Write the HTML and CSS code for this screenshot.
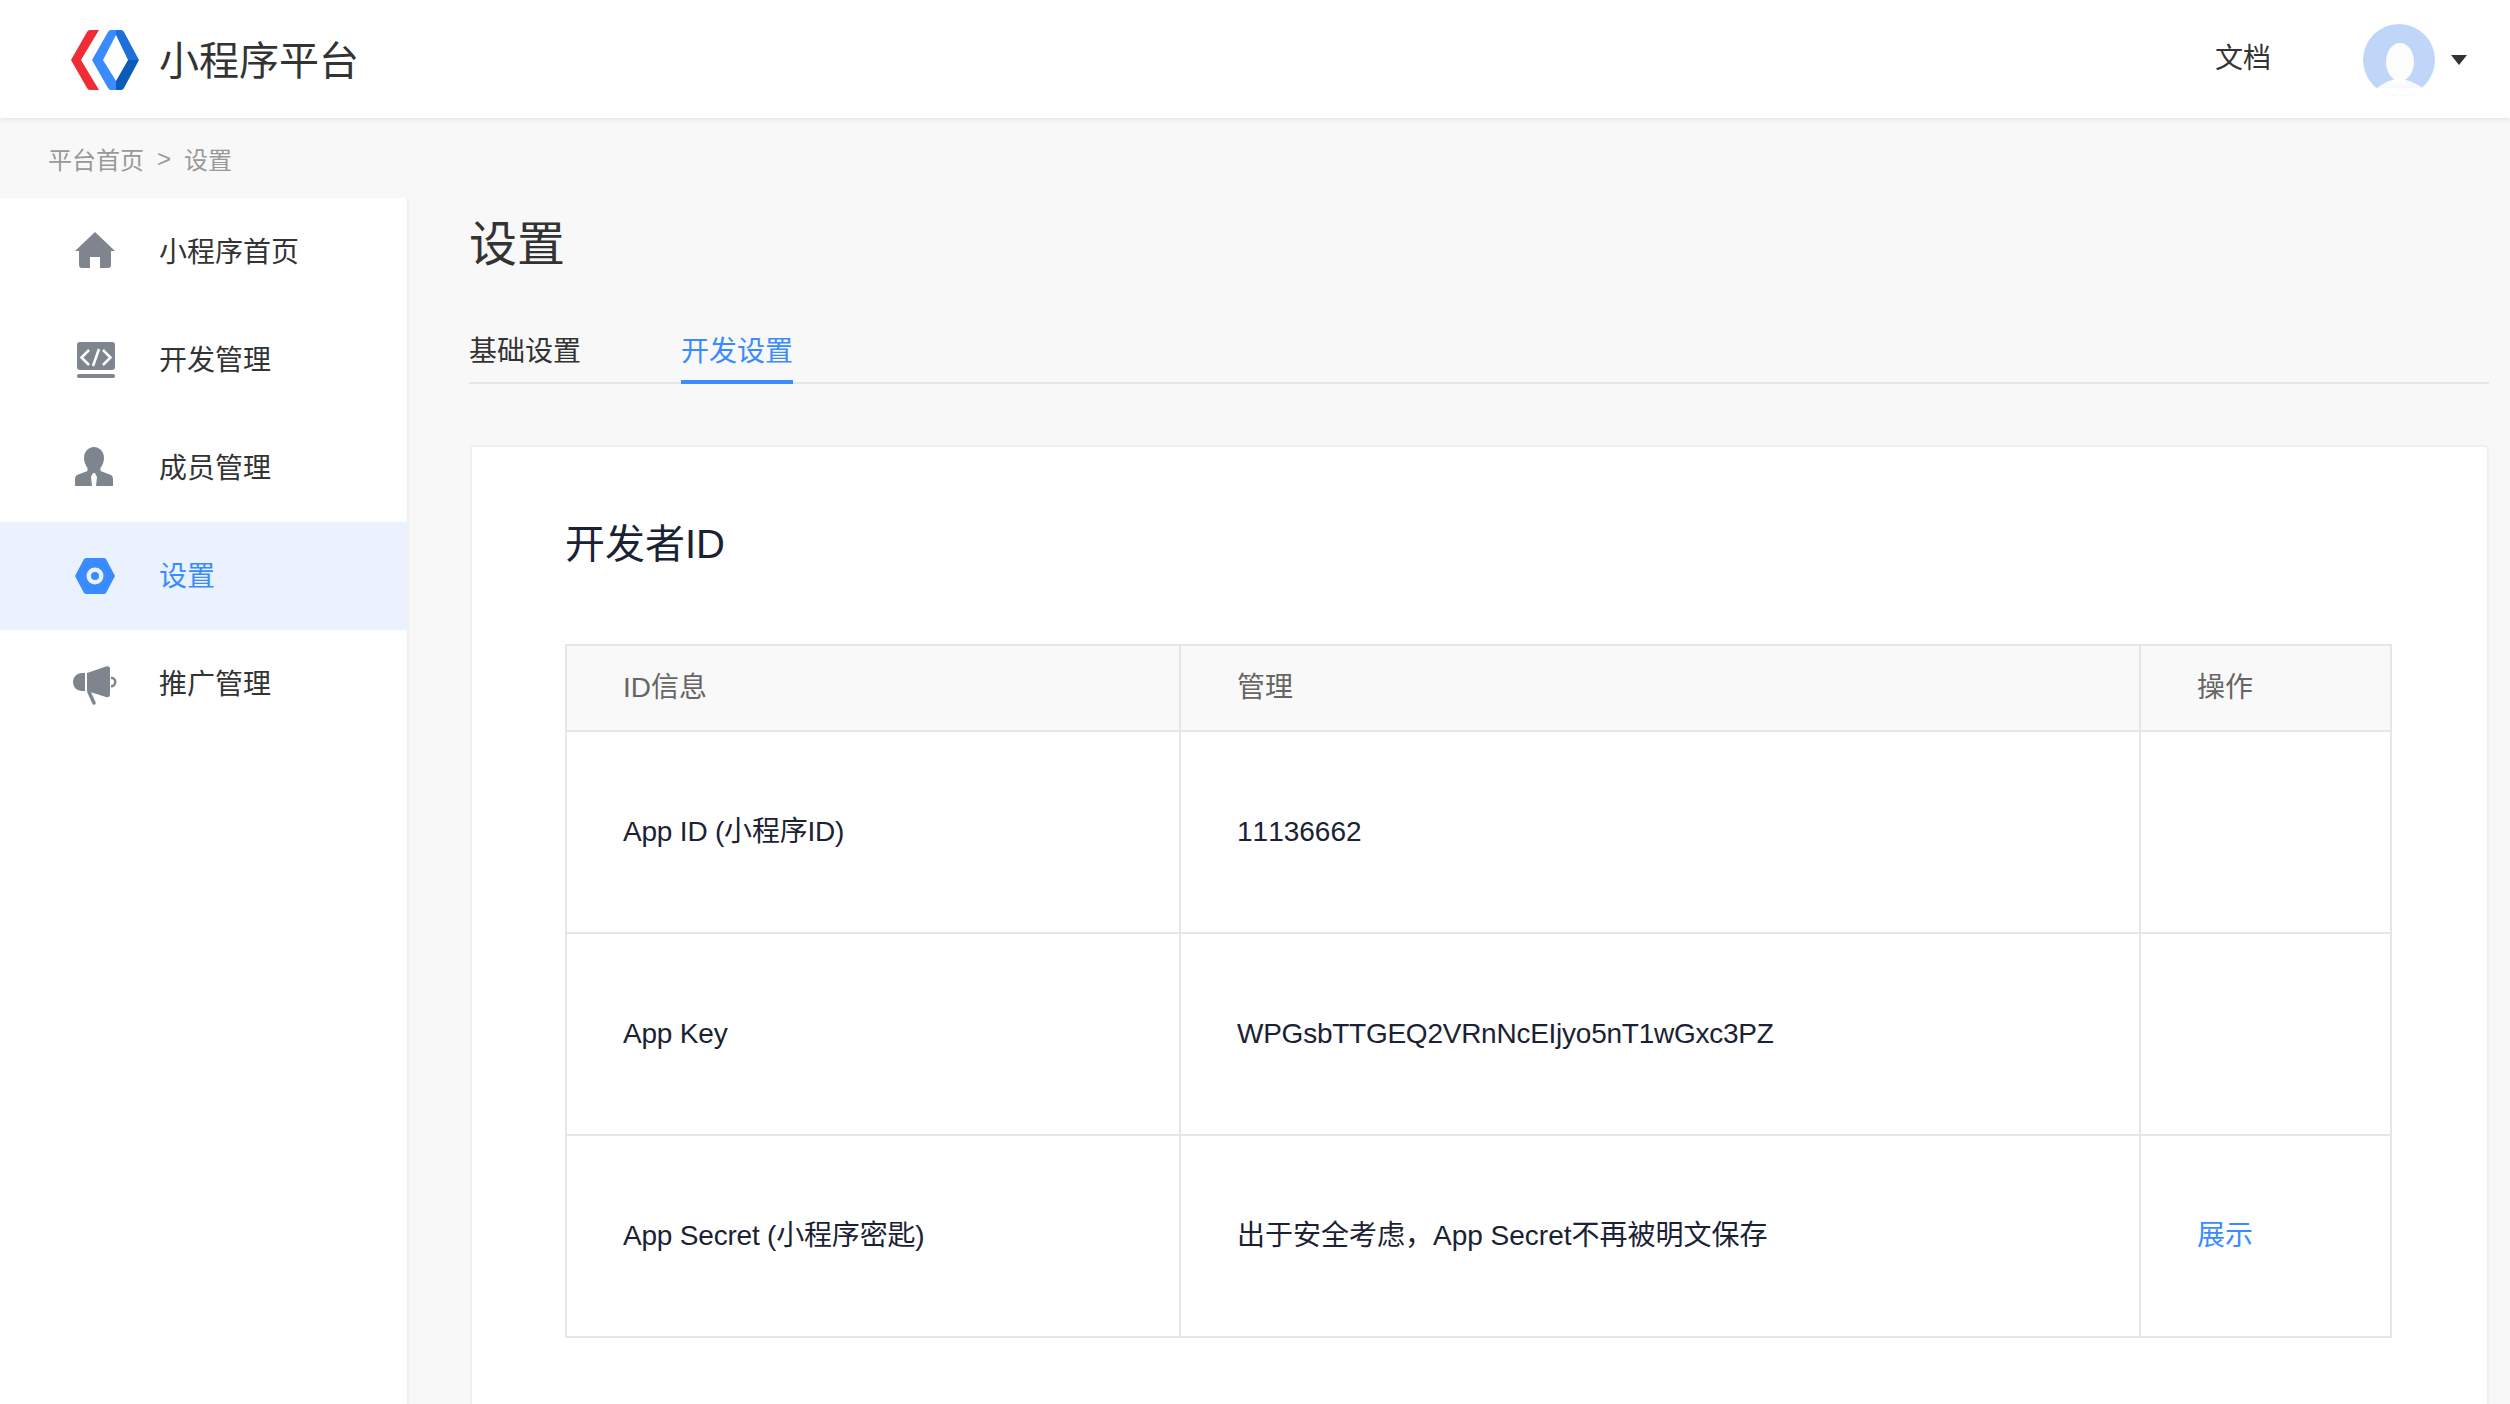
FILE: index.html
```html
<!DOCTYPE html>
<html lang="zh-CN">
<head>
<meta charset="utf-8">
<title>小程序平台</title>
<link rel="stylesheet" href="styles.css">
</head>
<body>
<div class="page">
  <header class="topbar">
    <div class="brand">
      <svg class="logo" viewBox="0 0 68 60" width="68" height="60">
        <path fill="#ee2d37" d="M0 30 16 2Q17 0 19 0H28L10 30 28 60H19Q17 60 16 58Z"/>
        <path fill="#3a8bff" d="M21 30 37 2Q38 0 40 0H45V5L32 30 45 51V60H40Q38 60 37 58Z"/>
        <path fill="#1e70d8" d="M45 0H50Q52 0 53 2L68 30H57L45 5Z"/>
        <path fill="#0d5bb8" d="M68 30 53 58Q52 60 50 60H45V51L57 30Z"/>
      </svg>
      <span class="brand-name">小程序平台</span>
    </div>
    <div class="top-right">
      <span class="doc-link">文档</span>
      <svg class="avatar" viewBox="0 0 72 72" width="72" height="72">
        <defs>
          <linearGradient id="fade" x1="0" y1="0" x2="0" y2="1">
            <stop offset="0" stop-color="#fff"/>
            <stop offset="1" stop-color="#eef3fc"/>
          </linearGradient>
          <clipPath id="disc"><circle cx="36" cy="36" r="36"/></clipPath>
        </defs>
        <g clip-path="url(#disc)">
          <rect width="72" height="72" fill="#c0d6f8"/>
          <ellipse cx="37" cy="38" rx="14" ry="19" fill="#fdfdfe"/>
          <path fill="url(#fade)" d="M14 64Q26 55 36 55Q46 55 60 64V72H14Z"/>
          <rect y="64" width="72" height="8" fill="#fff"/>
        </g>
      </svg>
      <span class="caret"></span>
    </div>
  </header>
  <nav class="crumbs"><span>平台首页</span><span class="sep">&gt;</span><span>设置</span></nav>
  <div class="body-row">
    <aside class="sidebar">
      <a class="menu-item">
        <svg class="menu-icon" viewBox="0 0 44 44" width="44" height="44"><path fill="#7f858f" d="M22 2 42 21H38V35Q38 38 35 38H27V27H17V38H9Q6 38 6 35V21H2Z"/></svg>
        <span>小程序首页</span>
      </a>
      <a class="menu-item">
        <svg class="menu-icon" viewBox="0 0 44 44" width="44" height="44"><rect x="4" y="4" width="38" height="28" rx="3" fill="#7f858f"/><rect x="4" y="36" width="38" height="4" rx="2" fill="#7f858f"/><path fill="none" stroke="#fff" stroke-width="2.500" d="M16 12 8.500 19.500 16 27M30 12 37.500 19.500 30 27M26 11 20 28"/></svg>
        <span>开发管理</span>
      </a>
      <a class="menu-item">
        <svg class="menu-icon" viewBox="0 0 44 44" width="44" height="44"><path fill="#7f858f" d="M21 1C27 1 31 6 31 12 31 16 29.500 19 27.500 22V25L38 29Q40 30 40 33V40H23L24 31 22 27H20L18 31 19 40H2V33Q2 30 4 29L14.500 25V22C12.500 19 11 16 11 12 11 6 15 1 21 1Z"/></svg>
        <span>成员管理</span>
      </a>
      <a class="menu-item active">
        <svg class="menu-icon" viewBox="0 0 44 44" width="44" height="44"><path fill="#3a8bff" fill-rule="evenodd" d="M2 22 11 5Q12 4 13 4H31Q32 4 33 5L42 22 33 39Q32 40 31 40H13Q12 40 11 39ZM22 13.500A8.500 8.500 0 1 0 22 30.500 8.500 8.500 0 1 0 22 13.500Z"/><circle cx="22" cy="22" r="4" fill="#3a8bff"/></svg>
        <span>设置</span>
      </a>
      <a class="menu-item">
        <svg class="menu-icon" viewBox="0 0 44 44" width="44" height="44"><path fill="#7f858f" d="M9 11H12V29H9C4 29 0 25 0 20S4 11 9 11ZM14 11 33 4.500Q37 3.500 37 7V32Q37 36 33 35L14 29ZM38 14.500A5.500 5.500 0 0 1 38 25.500V23A3 3 0 0 0 38 17Z"/><path fill="none" stroke="#7f858f" stroke-width="3.500" stroke-linecap="round" d="M16 30 21 41"/></svg>
        <span>推广管理</span>
      </a>
    </aside>
    <main class="content">
      <h1 class="page-title">设置</h1>
      <div class="tabs">
        <span class="tab">基础设置</span>
        <span class="tab current">开发设置</span>
      </div>
      <section class="card">
        <h2 class="card-title">开发者ID</h2>
        <table class="id-table">
          <colgroup><col class="col-a"><col class="col-b"><col class="col-c"></colgroup>
          <thead>
            <tr><th>ID信息</th><th>管理</th><th>操作</th></tr>
          </thead>
          <tbody>
            <tr><td class="name">App ID (小程序ID)</td><td class="digits">11136662</td><td></td></tr>
            <tr><td class="name">App Key</td><td class="key">WPGsbTTGEQ2VRnNcEIjyo5nT1wGxc3PZ</td><td></td></tr>
            <tr><td class="name">App Secret (小程序密匙)</td><td>出于安全考虑，App Secret不再被明文保存</td><td><a class="link">展示</a></td></tr>
          </tbody>
        </table>
      </section>
    </main>
  </div>
</div>
</body>
</html>
```

FILE: styles.css
```css
* { box-sizing: border-box; }
html, body { margin: 0; padding: 0; height: 100%; overflow: hidden; }
body {
  background: #f8f8f8;
  color: #333;
  font-family: "Liberation Sans", "Noto Sans CJK SC", sans-serif;
}
.page { height: 1404px; display: flex; flex-direction: column; overflow: hidden; }
.topbar {
  flex: none;
  height: 118px;
  background: #fff;
  box-shadow: 0 1px 5px rgba(0, 0, 0, 0.1);
  display: flex;
  align-items: center;
  justify-content: space-between;
  padding: 2px 43px 0 71px;
  position: relative;
  z-index: 1;
}
.brand { display: flex; align-items: center; gap: 20px; }
.logo { display: block; }
.brand-name { font-size: 40px; line-height: 60px; color: #333; padding-top: 2px; }
.top-right { display: flex; align-items: center; }
.doc-link { font-size: 28px; line-height: 40px; color: #333; margin-right: 92px; margin-top: -3px; }
.avatar { display: block; }
.caret {
  width: 0;
  height: 0;
  margin-left: 16px;
  border-left: 8px solid transparent;
  border-right: 8px solid transparent;
  border-top: 10px solid #333;
}
.crumbs {
  flex: none;
  height: 80px;
  padding: 1px 0 0 48px;
  display: flex;
  align-items: center;
  font-size: 24px;
  color: #999;
}
.sep { margin: 0 13px; }
.body-row { flex: 1; display: flex; min-height: 0; }
.sidebar {
  flex: none;
  width: 409px;
  background: #fff;
  border-right: 2px solid #f0f0f0;
}
.menu-item {
  display: flex;
  align-items: center;
  height: 108px;
  padding-left: 73px;
  font-size: 28px;
  color: #333;
}
.menu-item span { padding-bottom: 5px; }
.menu-item .menu-icon { margin-right: 42px; flex: none; }
.menu-item.active { background: #e9f2fe; color: #3a8bff; }
.content { flex: 1; min-width: 0; padding: 17px 21px 0 60px; }
.page-title { margin: 0; font-size: 48px; line-height: 60px; font-weight: 400; color: #333; }
.tabs {
  display: flex;
  gap: 100px;
  margin-top: 57px;
  height: 52px;
  border-bottom: 2px solid #e6e6e6;
}
.tab { font-size: 28px; line-height: 40px; height: 52px; color: #333; width: 112px; }
.tab.current { color: #3a8bff; border-bottom: 4px solid #3a8bff; }
.card {
  margin-top: 61px;
  margin-left: 1px;
  padding: 67px 94px 0 93px;
  background: #fff;
  border: 2px solid #f0f0f0;
  border-radius: 4px;
  height: 1000px;
}
.card-title { margin: 0; font-size: 40px; line-height: 60px; font-weight: 400; color: #1a2233; }
.id-table {
  margin-top: 70px;
  width: 1825px;
  border-collapse: collapse;
  table-layout: fixed;
  font-size: 28px;
  line-height: 40px;
}
.col-a { width: 614px; }
.col-b { width: 960px; }
.col-c { width: 251px; }
.id-table th, .id-table td {
  border: 2px solid #e6e6e6;
  padding: 0 0 0 56px;
  text-align: left;
  font-weight: 400;
}
.id-table th { height: 86px; background: #f9f9f9; color: #666; }
.id-table td { height: 202px; color: #1a2233; }
.id-table .name { letter-spacing: -0.2px; }
.id-table .digits { font-kerning: none; }
.id-table .key { letter-spacing: -0.25px; }
.link { color: #3a8bff; }
```
